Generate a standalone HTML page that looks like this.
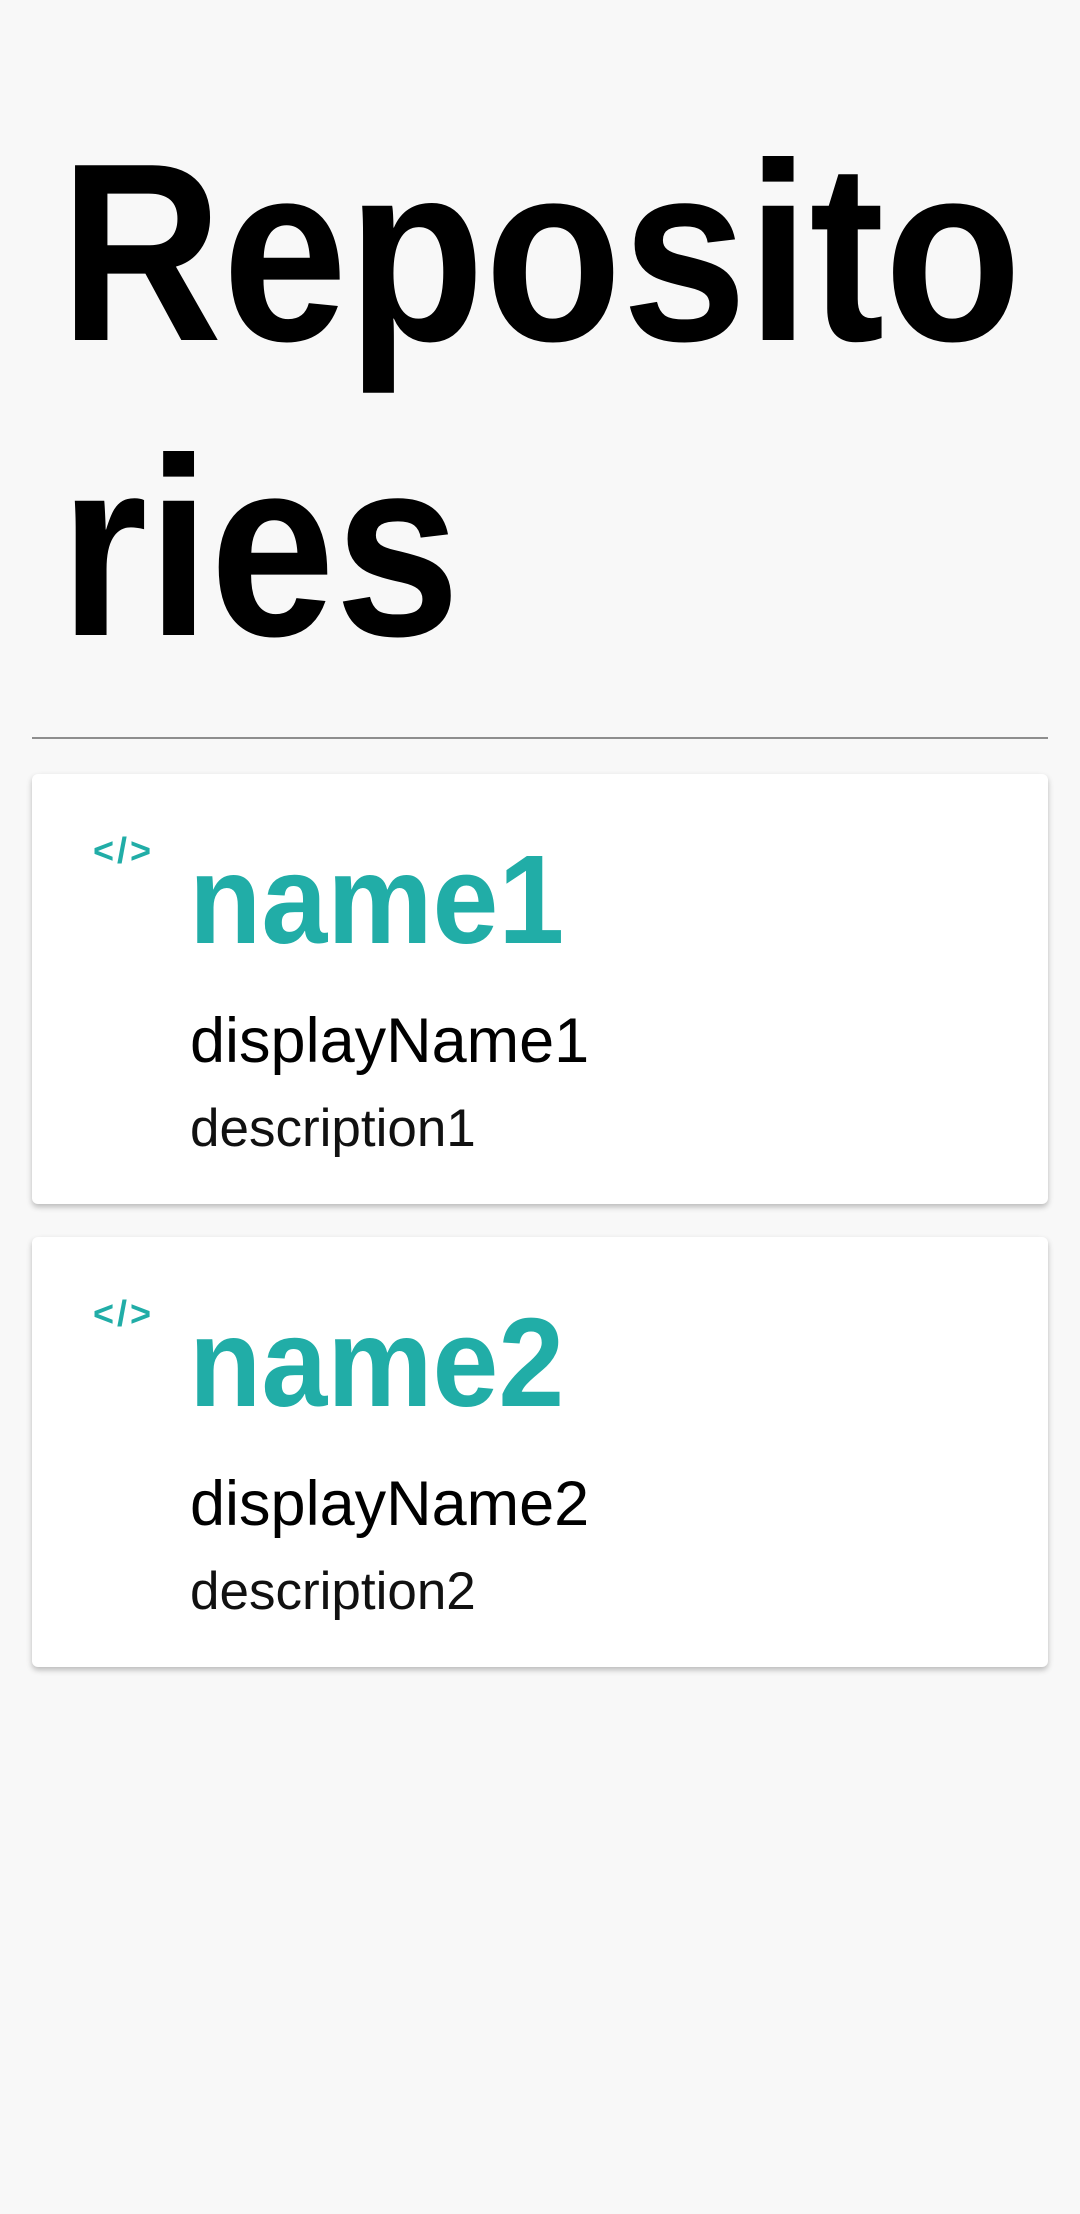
<!DOCTYPE html>
<html><head><meta charset="utf-8"><style>
html,body{margin:0;padding:0}
body{width:1080px;height:2214px;background:#f8f8f8;position:relative;overflow:hidden;font-family:"Liberation Sans",sans-serif}
.t{position:absolute;white-space:nowrap;transform-origin:0 0}
.title{font-size:254px;line-height:254px;font-weight:bold;color:#000;transform:scaleX(0.885);left:60px}
.hr{position:absolute;left:32px;width:1016px;top:737px;height:2px;background:#8e8e8e}
.card{position:absolute;left:32px;width:1016px;height:430px;background:#fff;border-radius:6px;box-shadow:0 3px 6px rgba(0,0,0,.25)}
.ic{font-size:36px;line-height:36px;font-weight:bold;color:#21ada7;left:93px;letter-spacing:3px}
.nm{font-size:126px;line-height:126px;font-weight:bold;color:#21ada7;left:189px;transform:scaleX(0.94)}
.dn{font-size:63px;line-height:63px;color:#000;left:190px}
.ds{font-size:53px;line-height:53px;color:#111;left:190px}
</style></head><body>
<div class="t title" style="top:125px">Reposito</div>
<div class="t title" style="top:420px">ries</div>
<div class="hr"></div>
<div class="card" style="top:774px"></div>
<div class="card" style="top:1237px"></div>
<div class="t ic" style="top:833px">&lt;/&gt;</div>
<div class="t nm" style="top:837px">name1</div>
<div class="t dn" style="top:1010px">displayName1</div>
<div class="t ds" style="top:1102px">description1</div>
<div class="t ic" style="top:1296px">&lt;/&gt;</div>
<div class="t nm" style="top:1300px">name2</div>
<div class="t dn" style="top:1473px">displayName2</div>
<div class="t ds" style="top:1565px">description2</div>
</body></html>
